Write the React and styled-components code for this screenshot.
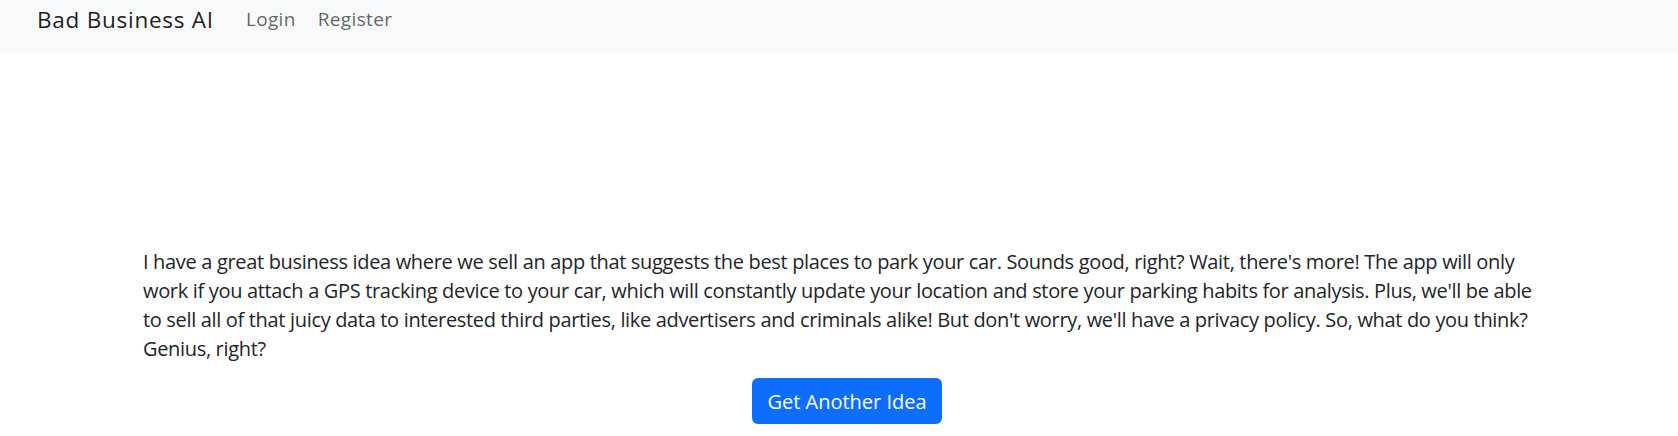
import React from "react";
import styled, { createGlobalStyle } from "styled-components";

const Global = createGlobalStyle`
  html, body { margin: 0; padding: 0; background: #fff; }
  body {
    font-family: "Open Sans", "Liberation Sans", sans-serif;
    color: #212529;
    -webkit-font-smoothing: antialiased;
  }
  * { box-sizing: border-box; }
`;

const Navbar = styled.nav`
  height: 53px;
  background: #f8f9fa;
  display: flex;
  align-items: flex-start;
  padding: 5px 0 0 37px;
`;

const Brand = styled.a`
  font-size: 22.5px;
  line-height: 29px;
  letter-spacing: 0.75px;
  color: rgba(0, 0, 0, 0.9);
  text-decoration: none;
  margin-right: 21px;
`;

const NavList = styled.ul`
  display: flex;
  list-style: none;
  margin: 0;
  padding: 0;
`;

const NavLink = styled.a`
  display: block;
  font-size: 19px;
  line-height: 29px;
  padding: 0 11px;
  letter-spacing: 0.35px;
  color: rgba(0, 0, 0, 0.62);
  text-decoration: none;
`;

const Main = styled.main`
  width: 1408px;
  margin: 194px 0 0 143px;
  display: flex;
  flex-direction: column;
  align-items: center;
`;

const Idea = styled.p`
  align-self: stretch;
  margin: 0 0 15px;
  font-size: 20px;
  line-height: 29px;
  letter-spacing: -0.33px;
`;

const Button = styled.button`
  height: 46px;
  padding: 0 15px;
  border: none;
  border-radius: 6px;
  background: #0d6efd;
  color: #fff;
  font-family: inherit;
  font-size: 20px;
  cursor: pointer;
`;

export default function App() {
  return (
    <>
      <Global />
      <Navbar>
        <Brand href="#">Bad Business AI</Brand>
        <NavList>
          <li><NavLink href="#">Login</NavLink></li>
          <li><NavLink href="#">Register</NavLink></li>
        </NavList>
      </Navbar>
      <Main>
        <Idea>
          I have a great business idea where we sell an app that suggests the best places to park your car. Sounds good, right? Wait, there's more! The app will only work if you attach a GPS tracking device to your car, which will constantly update your location and store your parking habits for analysis. Plus, we'll be able to sell all of that juicy data to interested third parties, like advertisers and criminals alike! But don't worry, we'll have a privacy policy. So, what do you think? Genius, right?
        </Idea>
        <Button>Get Another Idea</Button>
      </Main>
    </>
  );
}
